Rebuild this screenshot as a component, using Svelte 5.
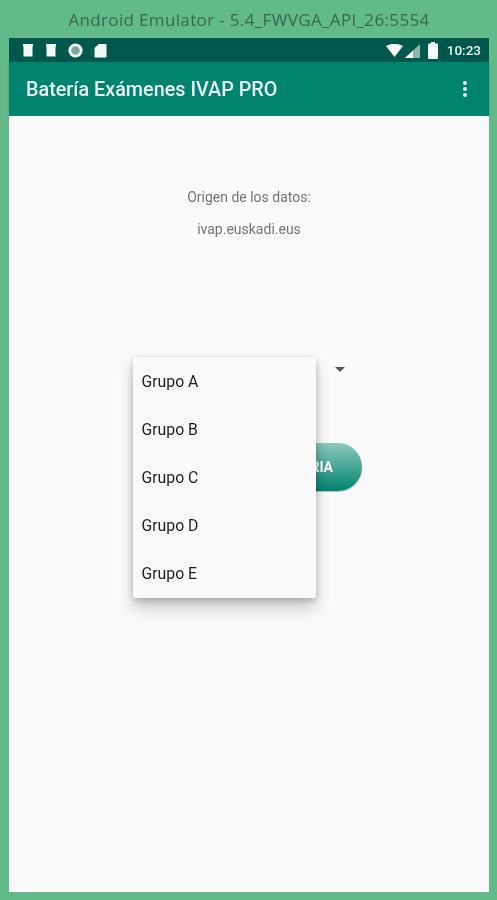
<script>
  const groups = ['Grupo A', 'Grupo B', 'Grupo C', 'Grupo D', 'Grupo E'];
</script>

<div class="window">
  <div class="titlebar">Android Emulator - 5.4_FWVGA_API_26:5554</div>
  <div class="device">
    <div class="status">
      <div class="notifs">
        <svg width="12" height="14" viewBox="0 0 12 14"><path d="M1 1h10v2.500H10.500V13.500H1.500V3.500H1z" fill="#f1f7f5"/></svg>
        <svg width="12" height="14" viewBox="0 0 12 14"><path d="M1 1h10v2.500H10.500V13.500H1.500V3.500H1z" fill="#f1f7f5"/></svg>
        <svg width="15" height="15" viewBox="0 0 15 15"><circle cx="7.500" cy="7.500" r="5.700" fill="#7fa89c" stroke="#f1f7f5" stroke-width="2.800"/></svg>
        <svg width="13" height="15" viewBox="0 0 13 15"><path d="M5 1h6.500a1 1 0 0 1 1 1v11.500a1 1 0 0 1-1 1h-10a1 1 0 0 1-1-1V5z" fill="#f1f7f5"/></svg>
      </div>
      <div class="sys">
        <svg class="wifi" width="17" height="13" viewBox="0 0 17 13"><path d="M0 2Q8.500-2.500 17 2L8.500 13z" fill="#fff"/></svg>
        <svg class="signal" width="16" height="15" viewBox="0 0 16 15"><path d="M0 15L15 1V15z" fill="#8fb5aa"/><path d="M0 15L8 7.500V15z" fill="#fff"/></svg>
        <svg class="battery" width="10" height="17" viewBox="0 0 10 17"><path d="M3 0h4v1.500h2a1 1 0 0 1 1 1V16a1 1 0 0 1-1 1H1a1 1 0 0 1-1-1V2.500a1 1 0 0 1 1-1h2z" fill="#f6faf9"/></svg>
        <span class="time">10:23</span>
      </div>
    </div>
    <header class="appbar">
      <h1>Batería Exámenes IVAP PRO</h1>
      <svg width="6" height="18" viewBox="0 0 6 18"><circle cx="3" cy="3" r="2" fill="#e8f3f0"/><circle cx="3" cy="9" r="2" fill="#e8f3f0"/><circle cx="3" cy="15" r="2" fill="#e8f3f0"/></svg>
    </header>
    <main class="content">
      <p class="origin">Origen de los datos:</p>
      <p class="source">ivap.euskadi.eus</p>
      <div class="spinner"><span class="arrow"></span></div>
      <button class="cta">COMENZAR BATERIA</button>
      <ul class="menu">
        {#each groups as g}
          <li>{g}</li>
        {/each}
      </ul>
    </main>
  </div>
</div>

<style>
  :global(body) {
    margin: 0;
    background: #62b98a;
  }
  .window {
    width: 497px;
    height: 900px;
    box-sizing: border-box;
    padding: 0 8px 8px 9px;
    background: #62b98a;
    display: flex;
    flex-direction: column;
    font-family: Roboto, sans-serif;
    filter: blur(0.5px);
  }
  .titlebar {
    height: 38px;
    flex: none;
    text-align: center;
    line-height: 40px;
    font-family: 'Open Sans', sans-serif;
    font-size: 17px;
    letter-spacing: 0.35px;
    color: #37694f;
    white-space: nowrap;
  }
  .device {
    flex: 1;
    display: flex;
    flex-direction: column;
    min-height: 0;
  }
  .status {
    height: 24px;
    flex: none;
    background: #00584d;
    display: flex;
    align-items: center;
    justify-content: space-between;
    padding: 0 8px 0 13px;
  }
  .notifs {
    display: flex;
    align-items: center;
    gap: 11px;
  }
  .sys {
    display: flex;
    align-items: center;
  }
  .wifi { margin-right: 2px; }
  .signal { margin-right: 7px; }
  .battery { margin-right: 9px; }
  .time {
    color: #e9f2ef;
    font-size: 13.500px;
    font-weight: 500;
  }
  .appbar {
    height: 54px;
    flex: none;
    background: #00836f;
    display: flex;
    align-items: center;
    justify-content: space-between;
    padding: 0 21px 0 17px;
    box-shadow: 0 1px 2px rgba(0, 60, 50, 0.3);
    position: relative;
  }
  h1 {
    margin: 0;
    color: #e9f5f2;
    font-size: 19.800px;
    font-weight: 500;
    white-space: nowrap;
  }
  .content {
    flex: 1;
    background: #fafafa;
    position: relative;
    display: flex;
    flex-direction: column;
    align-items: center;
  }
  p {
    margin: 0;
    color: #757575;
    font-size: 14px;
    line-height: 16px;
  }
  .origin { margin-top: 73px; }
  .source { margin-top: 16px; }
  .spinner {
    margin-top: 120px;
    width: 226px;
    height: 24px;
    display: flex;
    justify-content: flex-end;
    align-items: center;
    box-sizing: border-box;
    padding-right: 17px;
  }
  .arrow {
    border-left: 5px solid transparent;
    border-right: 5px solid transparent;
    border-top: 5px solid #555;
  }
  .cta {
    margin-top: 62px;
    width: 226px;
    height: 48px;
    border: none;
    border-radius: 24px;
    background: linear-gradient(#8ccabd, #00836f);
    box-shadow: 0 1px 1px rgba(0, 70, 60, 0.3);
    color: #fff;
    font-family: Roboto, sans-serif;
    font-size: 14px;
    font-weight: 700;
    padding: 0 29px 0 0;
    text-align: right;
  }
  .menu {
    position: absolute;
    left: 124px;
    top: 241px;
    width: 183px;
    margin: 0;
    padding: 1px 0 0;
    list-style: none;
    background: #fafafa;
    box-shadow: 0 10px 16px rgba(0, 0, 0, 0.2), 0 2px 6px rgba(0, 0, 0, 0.2);
    border-radius: 2px;
  }
  li {
    height: 48px;
    line-height: 48px;
    padding-left: 8.500px;
    font-size: 15.800px;
    color: #1f1f1f;
  }
</style>
